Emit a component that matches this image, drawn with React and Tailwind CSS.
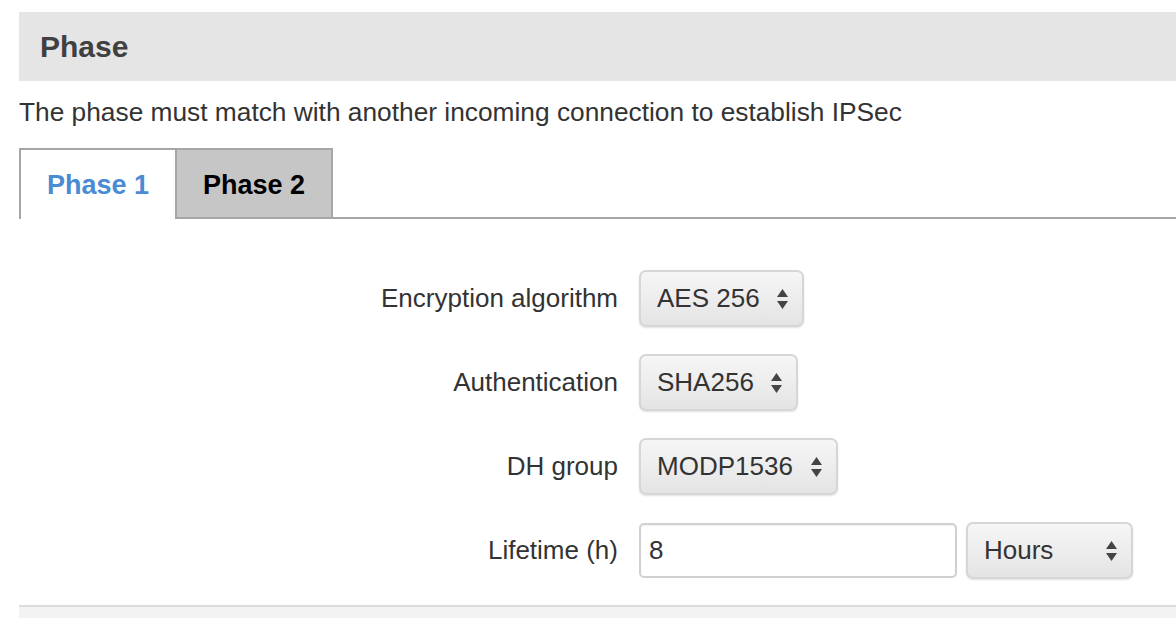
import React from 'react'

const FONT = "font-['Helvetica','Liberation_Sans',Arial,sans-serif]"

function Arrows() {
  return (
    <svg className="h-[22px] w-[13px] shrink-0" viewBox="0 0 13 22" fill="#444">
      <path d="M6.5 1 L12 9 H1 Z" />
      <path d="M6.5 21 L12 13 H1 Z" />
    </svg>
  )
}

function SelectBox({ value, width }) {
  return (
    <div
      className={`flex h-[57px] items-center justify-between rounded-[7px] border-2 border-[#d6d6d6] bg-gradient-to-b from-[#f6f6f6] to-[#e4e4e4] pl-[16px] pr-[13px] text-[26px] text-[#333] shadow-[0_1px_2px_rgba(0,0,0,0.12)] ${width}`}
    >
      <span>{value}</span>
      <Arrows />
    </div>
  )
}

function Row({ label, children }) {
  return (
    <div className="flex h-[57px] items-center">
      <div className="w-[599px] text-right text-[26px] text-[#333]">{label}</div>
      <div className="ml-[21px] flex items-center gap-[9px]">{children}</div>
    </div>
  )
}

export default function App() {
  return (
    <div className={`h-[618px] w-[1176px] overflow-hidden bg-white pl-[19px] pt-[12px] ${FONT}`}>
      {/* Section header */}
      <div className="flex h-[69px] items-center bg-[#e5e5e5] pl-[21px]">
        <h2 className="text-[30px] font-bold text-[#404040]">Phase</h2>
      </div>

      <p className="mt-[16px] text-[26.3px] leading-[30px] text-[#333]">
        The phase must match with another incoming connection to establish IPSec
      </p>

      {/* Tabs */}
      <div className="mt-[21px] flex border-b-2 border-[#a6a6a6]">
        <div className="relative z-10 -mb-[2px] flex h-[71px] w-[158px] items-center justify-center border-2 border-b-0 border-[#a6a6a6] bg-white pt-[2px] text-[27px] font-bold text-[#4a8cd3]">
          Phase 1
        </div>
        <div className="flex h-[69px] w-[156px] items-center justify-center border-r-2 border-t-2 border-[#a6a6a6] bg-[#c6c6c6] pt-[3px] text-[27px] font-bold text-black">
          Phase 2
        </div>
      </div>

      {/* Form */}
      <div className="mt-[51px] flex flex-col gap-[27px]">
        <Row label="Encryption algorithm">
          <SelectBox value="AES 256" width="w-[165px]" />
        </Row>
        <Row label="Authentication">
          <SelectBox value="SHA256" width="w-[159px]" />
        </Row>
        <Row label="DH group">
          <SelectBox value="MODP1536" width="w-[199px]" />
        </Row>
        <Row label="Lifetime (h)">
          <div className="flex h-[55px] w-[318px] items-center rounded-[5px] border-2 border-[#d0d0d0] bg-white pl-[8px] text-[26px] text-[#333] shadow-[inset_0_1px_2px_rgba(0,0,0,0.06)]">
            8
          </div>
          <SelectBox value="Hours" width="w-[167px]" />
        </Row>
      </div>

      <div className="mt-[26px] h-[30px] border-t-2 border-[#dcdcdc] bg-[#f3f3f3]" />
    </div>
  )
}
